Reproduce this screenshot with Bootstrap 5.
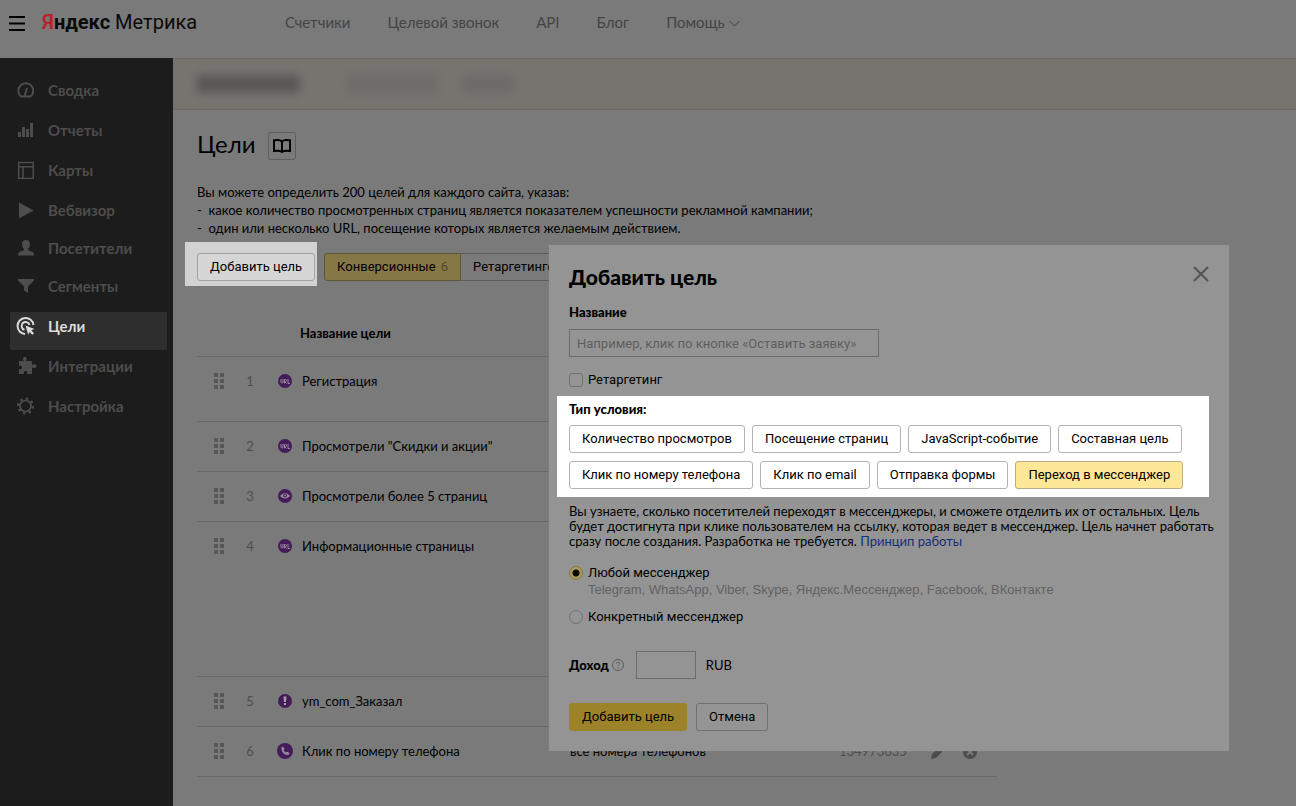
<!DOCTYPE html>
<html lang="ru">
<head>
<meta charset="utf-8">
<meta name="viewport" content="width=device-width, initial-scale=1">
<title>Яндекс Метрика — Цели</title>
<link href="https://cdn.jsdelivr.net/npm/bootstrap@5.3.0/dist/css/bootstrap.min.css" rel="stylesheet">
<style>
  body { background: #7a7a7a; color: #000; font: 400 13px/18px Lato, "Noto Sans", sans-serif; }
  svg { display: block; flex: none; }

  /* Top bar */
  .topbar { height: 58px; }
  .brand-logo { width: 243px; font: 400 20px/28px Roboto, "Liberation Sans", sans-serif; color: #0a0a0a; }
  .brand-logo b span { color: #b3262b; }
  .burger { width: 34px; }
  .topnav { gap: 37px; }
  .topnav a { color: #444; font-size: 15px; line-height: 20px; }

  /* Side menu */
  .side { width: 173px; background: #1c1c1c; padding-top: 18px; }
  .side a { display: flex; gap: 14px; height: 38px; margin: 0 6px 0 10px; padding: 5px 0 0 7px;
            color: #4d4d4d; font-weight: 700; font-size: 15px; line-height: 18px; text-decoration: none; }
  .side a.gap-after { margin-bottom: 2px; }
  .side a.current { background: #2e2e2e; color: #dcdcdc; }
  .side svg { width: 17px; height: 18px; }

  /* Main column */
  .account { height: 52px; background: #75746f; border-top: 1px solid #6c6b67; border-bottom: 1px solid #6c6b67; padding-left: 24px; }
  .hidden-name { height: 18px; filter: blur(4px); border-radius: 3px; }
  .page-body { padding: 22px 24px; }
  .page-title { font-size: 24px; line-height: 24px; font-weight: 400; }
  .book { width: 28px; height: 28px; border: 1px solid #5e5e5e; border-radius: 3px; background: none; }
  .intro { margin-top: 23px; }
  .toolbar { margin: 5px 0 0 -12px; gap: 7px; }
  .spot { background: #d2d2d2; padding: 11px 2px 5px 12px; }
  .tabs-group { padding-bottom: 5px; }

  .ya-btn { height: 28px; padding: 0 12px; border: 1px solid #b4b4b4; border-radius: 3px; background: #fff; color: #000;
            font: 400 13px/26px Roboto, "Liberation Sans", sans-serif; white-space: nowrap; }
  .spot .ya-btn { background: #d6d6d6; border-color: #a2a2a2; }
  .tab-btn { background: transparent; border-color: #5c5c5c; }
  .tab-btn.current { background: #857746; border-color: #5f563a; }
  .tab-btn span { color: #4f492f; margin-left: 2px; }

  /* Goals table */
  .goals { width: 100%; max-width: 800px; margin-top: 23px; table-layout: fixed; }
  .goals th { padding: 15px 0 13px; height: 47px; }
  .goals td { padding: 15px 0 0; height: 50px; vertical-align: top; }
  .goals tr { border-bottom: 1px solid #6a6a6a; }
  .goals .tall td { height: 65px; }
  .goals .tallest td { height: 155px; }
  .goals .num { color: #4f4f4f; text-align: center; padding-right: 19px; }
  .goals svg { height: 18px; }
  .muted { color: #4f4f4f; }

  /* Dialog */
  .goal-dialog { position: absolute; top: 187px; right: 67px; width: 680px; padding: 20px; background: #949494;
                 box-shadow: 0 0 1px #888; }
  .goal-dialog h2 { font-size: 21px; line-height: 24px; font-weight: 900; margin: 0 0 14px; }
  .strong { font-weight: 900; }
  .ui-text { font-family: Roboto, "Liberation Sans", sans-serif; }
  .ya-input { display: block; height: 28px; border: 1px solid #6c6c6c; background: transparent; padding: 0 7px; color: #000;
              font: 400 13px/26px Roboto, "Liberation Sans", sans-serif; }
  .ya-input::placeholder { color: #5e5e5e; opacity: 1; }
  .name-input { width: 310px; margin-top: 8px; }
  .tick-row { display: flex; align-items: center; gap: 5px; }
  .tick { appearance: none; width: 14px; height: 14px; margin: 0; border: 1px solid #727272; flex: none; }
  .tick[type=checkbox] { border-radius: 3px; }
  .tick[type=radio] { border-radius: 50%; }
  .tick[type=radio]:checked { border-color: #8a7430; background: radial-gradient(circle, #0c0a00 0 3px, #a89a62 4px); }
  .types { background: #fff; margin: 7px 0 0 -12px; padding: 4px 0 8px 12px; }
  .types .choices { margin-top: 7px; display: flex; flex-wrap: wrap; gap: 8px 7px; padding-right: 20px; }
  .choices .current { background: #ffe798; border-color: #b9ad85; }
  .hint { line-height: 15px; margin: 7px -16px 15px 0; }
  .hint a { color: #162d7a; text-decoration: none; }
  .sub { margin: 0 0 10px 19px; line-height: 16px; color: #626262; font-family: "Liberation Sans", sans-serif; }
  .income-row { display: flex; align-items: center; margin-top: 25px; }
  .income-row .ya-input { width: 60px; margin: 0 10px 0 12px; }
  .income-row svg { margin-left: 3px; }
  .actions { display: flex; gap: 9px; margin-top: 24px; }
  .btn-go { background: #9c8228; border-color: #9c8228; }
  .btn-off { background: transparent; border-color: #707070; }
  .close-x { position: absolute; top: 21px; right: 20px; border: 0; padding: 0; background: none; }
</style>
</head>
<body>
<div class="d-flex flex-column min-vh-100">
  <header class="topbar d-flex">
    <button class="burger border-0 bg-transparent p-0 ps-2 d-flex pt-3" aria-label="Меню">
      <svg width="18" height="16" viewBox="0 0 18 16" stroke="#000" stroke-width="2"><path d="M1 1h16M1 7.500h16M1 14h16"/></svg>
    </button>
    <div class="brand-logo ps-2 pt-2"><b><span>Я</span>ндекс</b> Метрика</div>
    <nav class="topnav d-flex ps-2 pt-1 mt-2">
      <a href="#" class="text-decoration-none">Счетчики</a>
      <a href="#" class="text-decoration-none">Целевой звонок</a>
      <a href="#" class="text-decoration-none">API</a>
      <a href="#" class="text-decoration-none">Блог</a>
      <a href="#" class="text-decoration-none d-flex gap-1">Помощь
        <svg width="11" height="20" viewBox="0 0 11 20" fill="none" stroke="#444"><path d="M.5 9l5 5 5-5"/></svg></a>
    </nav>
  </header>

  <div class="d-flex flex-grow-1">
    <nav class="side flex-shrink-0" aria-label="Разделы">
      <a href="#" class="gap-after"><svg viewBox="0 0 17 18" fill="none" stroke="currentColor" stroke-width="2"><path d="M4 15.500a7.500 7.500 0 1 1 9.500 0zM7.500 15l2.500-8"/></svg>Сводка</a>
      <a href="#" class="gap-after"><svg viewBox="0 0 17 18" fill="currentColor"><path d="M1 11h3v5H1zM5 6h3v10H5zM9 8h3v8H9zM13 2h3v14h-3z"/></svg>Отчеты</a>
      <a href="#" class="gap-after"><svg viewBox="0 0 17 18" fill="none" stroke="currentColor" stroke-width="1.500"><path d="M1.700 1.500h14.500v16H1.700zM1.700 5.700h14.500M6 5.700V17"/></svg>Карты</a>
      <a href="#"><svg viewBox="0 0 17 18" fill="currentColor"><path d="M2 1.500v16L16.500 9.500z"/></svg>Вебвизор</a>
      <a href="#"><svg viewBox="0 0 17 18" fill="currentColor"><path d="M9 1c2.700 0 4 1.800 4 4.300 0 2-.8 3.400-1.800 4.400v1.500l4.500 1.800c1 .5 1.300 1.200 1.300 3.500H1c0-2.300.3-3 1.300-3.500l4.500-1.800V9.700C5.800 8.700 5 7.300 5 5.300 5 2.800 6.300 1 9 1z"/></svg>Посетители</a>
      <a href="#" class="gap-after"><svg viewBox="0 0 17 18" fill="currentColor"><path d="M1 2h16v1.500L11 9.500V16l-4-2.500v-4L1 3.500z"/></svg>Сегменты</a>
      <a href="#" class="gap-after current" aria-current="page"><svg viewBox="0 0 17 18" overflow="visible" fill="none" stroke="currentColor" stroke-width="2"><path d="M8 17A8 8 0 1 1 16.500 8M7.500 12.800A4 4 0 1 1 12.500 8"/><path d="M8.500 8.500l9 3.500-3.300 1.300 2.800 2.900-1.700 1.600-2.800-2.900-1.300 2.800z" fill="currentColor" stroke="none"/></svg>Цели</a>
      <a href="#" class="gap-after"><svg viewBox="0 0 17 18" overflow="visible" fill="currentColor"><path d="M2 4h5c-1.500-1.500-1.200-4 .8-4s2.500 2.500 1 4H15v4c1.500-1.500 4.500-1 4.500 1s-3 2.500-4.500 1.200V17h-5c.7-1.800 0-3-1.500-3s-2.200 1.200-1.500 3H2v-5c1.800.8 3 0 3-1.500S3.800 8.200 2 9z"/></svg>Интеграции</a>
      <a href="#"><svg viewBox="0 0 18 18" fill="none" stroke="currentColor"><circle cx="9" cy="9" r="5.800" stroke-width="1.800"/><circle cx="9" cy="9" r="7.800" stroke-width="2.600" stroke-dasharray="2.600 3.526"/></svg>Настройка</a>
    </nav>

    <main class="flex-grow-1 position-relative">
      <div class="account d-flex align-items-center">
        <div class="hidden-name" style="width:103px;background:#595856"></div>
        <div class="hidden-name ms-5" style="width:90px;background:#6e6d69"></div>
        <div class="hidden-name ms-4" style="width:52px;background:#6d6c68"></div>
      </div>

      <div class="page-body">
        <div class="d-flex gap-2">
          <h1 class="page-title m-0">Цели</h1>
          <button class="book p-0 ms-1 d-flex align-items-center justify-content-center" aria-label="Справка">
            <svg width="20" height="16" viewBox="0 0 20 16" fill="none" stroke="#000" stroke-width="2"><path d="M10 4C9.300 2.700 8 2 6.500 2 4.500 2 3.500 2 2 2.300V13c2-.3 6-.5 8 1 2-1.500 6-1.300 8-1V2.300C16.500 2 15.500 2 13.500 2 12 2 10.700 2.700 10 4zV14"/></svg>
          </button>
        </div>
        <div class="intro">Вы можете определить 200 целей для каждого сайта, указав:<br>-&nbsp; какое количество просмотренных страниц является показателем успешности рекламной кампании;<br>-&nbsp; один или несколько URL, посещение которых является желаемым действием.</div>

        <div class="toolbar d-flex">
          <div class="spot"><button class="ya-btn">Добавить цель</button></div>
          <div class="btn-group tabs-group align-self-end">
            <button class="ya-btn tab-btn current rounded-end-0">Конверсионные <span>6</span></button>
            <button class="ya-btn tab-btn border-start-0 rounded-start-0">Ретаргетинговые</button>
          </div>
        </div>

        <table class="goals">
          <colgroup><col style="width:44px"><col style="width:37px"><col style="width:24px"><col style="width:268px"><col style="width:269px"><col><col style="width:33px"><col style="width:34px"></colgroup>
          <thead><tr><th></th><th></th><th colspan="2" style="padding-left:22px">Название цели</th><th colspan="4"></th></tr></thead>
          <tbody id="goal-rows"></tbody>
        </table>
      </div>

      <form class="goal-dialog" role="dialog" aria-labelledby="dlg-title">
        <button type="button" class="close-x" aria-label="Закрыть"><svg width="16" height="16" viewBox="0 0 16 16" stroke="#545454" stroke-width="2"><path d="M1 1l14 14M15 1L1 15"/></svg></button>
        <h2 id="dlg-title">Добавить цель</h2>
        <label class="strong d-block" for="goal-name">Название</label>
        <input class="ya-input name-input" id="goal-name" type="text" placeholder="Например, клик по кнопке «Оставить заявку»">
        <div class="ui-text tick-row pt-1" style="margin-top:10px">
          <input class="tick" type="checkbox" id="retarget"><label for="retarget">Ретаргетинг</label>
        </div>

        <div class="types">
          <div class="strong">Тип условия:</div>
          <div class="choices">
            <button type="button" class="ya-btn">Количество просмотров</button>
            <button type="button" class="ya-btn">Посещение страниц</button>
            <button type="button" class="ya-btn">JavaScript-событие</button>
            <button type="button" class="ya-btn">Составная цель</button>
            <button type="button" class="ya-btn">Клик по номеру телефона</button>
            <button type="button" class="ya-btn">Клик по email</button>
            <button type="button" class="ya-btn">Отправка формы</button>
            <button type="button" class="ya-btn current">Переход в мессенджер</button>
          </div>
        </div>

        <p class="hint">Вы узнаете, сколько посетителей переходят в мессенджеры, и сможете отделить их от остальных. Цель<br>будет достигнута при клике пользователем на ссылку, которая ведет в мессенджер. Цель начнет работать<br>сразу после создания. Разработка не требуется. <a href="#">Принцип работы</a></p>

        <div class="ui-text tick-row">
          <input class="tick" type="radio" name="msgr" id="any" checked><label for="any">Любой мессенджер</label>
        </div>
        <div class="sub">Telegram, WhatsApp, Viber, Skype, Яндекс.Мессенджер, Facebook, ВКонтакте</div>
        <div class="ui-text tick-row">
          <input class="tick" type="radio" name="msgr" id="one"><label for="one">Конкретный мессенджер</label>
        </div>

        <div class="income-row">
          <label class="strong" for="income">Доход</label>
          <svg width="12" height="12" viewBox="0 0 12 12" fill="none" stroke="#5c5c5c"><circle cx="6" cy="6" r="5.500"/><path d="M4.300 4.700C4.300 2.500 7.700 2.600 7.700 4.600 7.700 5.800 6 5.800 6 7.300M6 8.300v1.200"/></svg>
          <input class="ya-input" id="income" type="text">RUB
        </div>
        <div class="actions">
          <button type="submit" class="ya-btn btn-go">Добавить цель</button>
          <button type="button" class="ya-btn btn-off">Отмена</button>
        </div>
      </form>
    </main>
  </div>
</div>

<script src="https://cdn.jsdelivr.net/npm/bootstrap@5.3.0/dist/js/bootstrap.bundle.min.js"></script>
<script>
  const disc = '<circle cx="7" cy="9" r="7" fill="#451c5a"/>';
  const icons = {
    url: disc + '<path d="M3 7v3q0 1 1 1t1-1V7M6.500 11.500V7.500h1q1 0 1 1t-1 1h-1l2 2M10 7v4.500h2" fill="none" stroke="#988a9c"/>',
    eye: disc + '<path d="M2 9q5-6 10 0q-5 5-10 0z" fill="#988a9c"/><circle cx="7" cy="8.600" r="2" fill="#451c5a"/><circle cx="7" cy="8.600" r="1" fill="#988a9c"/>',
    bang: disc + '<path d="M5.500 4.500h3L8 10H6zM6 11h2v2H6z" fill="#a99dac"/>',
    call: '<circle cx="7" cy="9" r="8" fill="#451c5a"/><path d="M3.500 5.500l1.500-1 1.500 2.300-.8 1.400q.8 1.500 2.300 2.300l1.300-.8 2.400 1.500-1.300 1.800C6.700 13.500 2.800 9.500 3.500 5.500z" fill="#988a9c"/>'
  };
  const grip = '<svg width="10" height="18" viewBox="0 0 10 18" fill="#575757" style="margin-left:17px"><path d="M0 1h4v4H0zM6 1h4v4H6zM0 7h4v4H0zM6 7h4v4H6zM0 13h4v4H0zM6 13h4v4H6z"/></svg>';
  const pencil = '<svg width="14" height="18" viewBox="0 0 14 18" fill="#4c4c4c"><path d="M1 17l1-5 6.500-6.500 4 4L6 16zM9.500 4.500L11 3l4 4-1.500 1.500z"/></svg>';
  const cross = '<svg width="14" height="18" viewBox="0 0 14 18"><circle cx="7" cy="10" r="7" fill="#4c4c4c"/><path d="M4 7l6 6M10 7l-6 6" stroke="#7a7a7a" stroke-width="2"/></svg>';
  const goals = [
    ['url', 'Регистрация', 'tall'],
    ['url', 'Просмотрели "Скидки и акции"', ''],
    ['eye', 'Просмотрели более 5 страниц', ''],
    ['url', 'Информационные страницы', 'tallest'],
    ['bang', 'ym_com_Заказал', ''],
    ['call', 'Клик по номеру телефона', '', 'все номера телефонов', '134973635']
  ];
  document.getElementById('goal-rows').innerHTML = goals.map(([icon, name, size, rule = '', id = ''], i) =>
    `<tr class="${size}"><td>${grip}</td><td class="num">${i + 1}</td>
     <td><svg width="14" viewBox="0 0 14 18" overflow="visible">${icons[icon]}</svg></td>
     <td>${name}</td><td>${rule}</td><td class="muted">${id}</td><td>${id && pencil}</td><td>${id && cross}</td></tr>`).join('');
</script>
</body>
</html>
